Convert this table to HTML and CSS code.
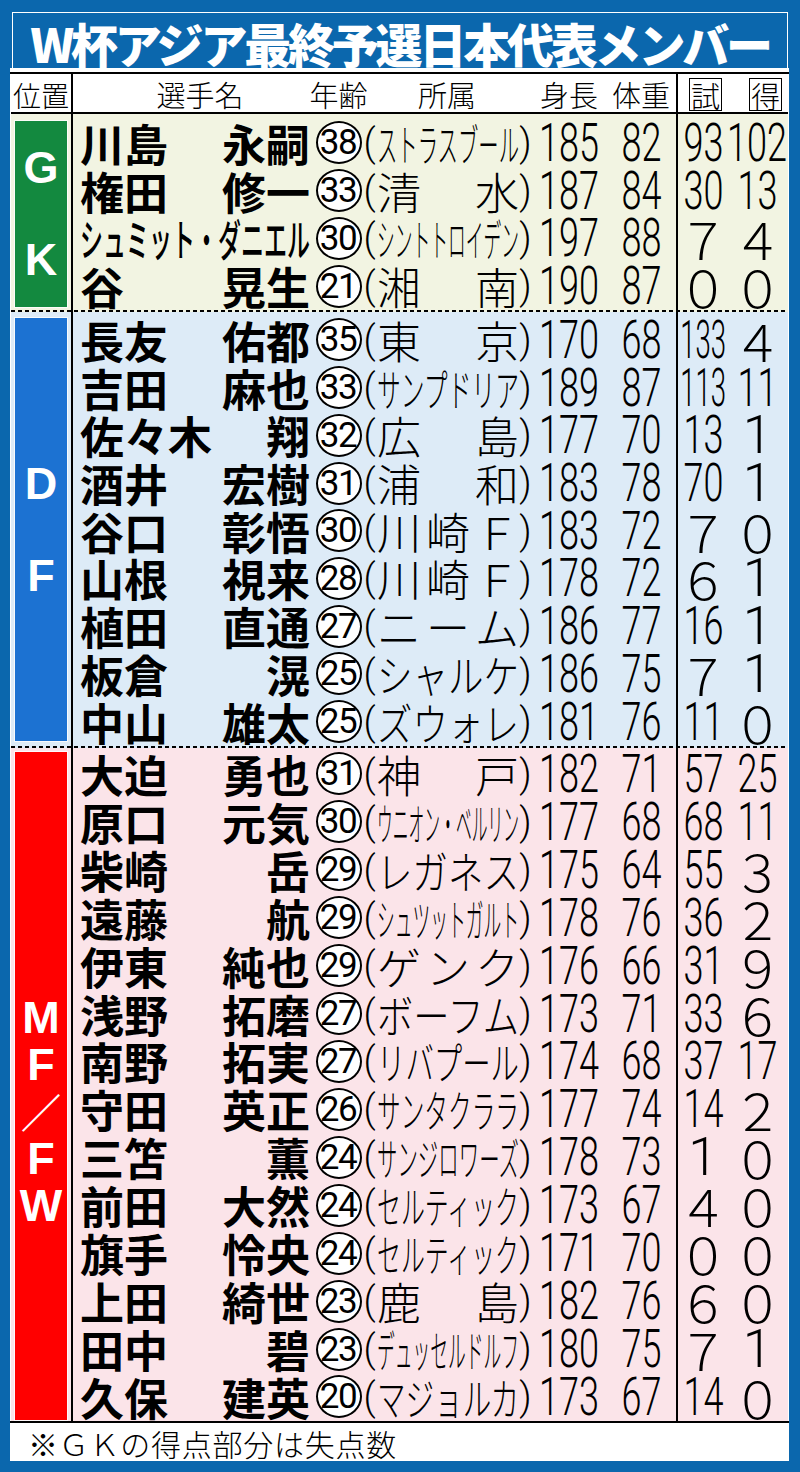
FILE: index.html
```html
<!DOCTYPE html>
<html lang="ja">
<head>
<meta charset="utf-8">
<title>W杯アジア最終予選日本代表メンバー</title>
<link rel="stylesheet" href="styles.css">
</head>
<body>
<div class="sheet">
  <header class="title"><div class="title-inner">W杯アジア最終予選日本代表メンバー</div></header>
  <div class="table">
    <div class="thead cols">
      <div class="h-pos">位置</div>
      <div class="h-name">選手名</div>
      <div class="h-age">年齢</div>
      <div class="h-club">所属</div>
      <div class="h-ht">身長</div>
      <div class="h-wt">体重</div>
      <div class="h-caps"><span class="boxed">試</span></div>
      <div class="h-goals"><span class="boxed">得</span></div>
    </div>

    <section class="group gk">
      <div class="label"><div class="label-box"><span>G</span><span>K</span></div></div>
      <div class="rows">
        <div class="row"><div class="c-name"><span>川島</span><span>永嗣</span></div><div class="c-age"><span class="circ">38</span></div><div class="c-club"><span class="par l">(</span><span class="club-in"><span class="ct">ストラスブール</span></span><span class="par r">)</span></div><div class="c-num"><span class="n">185</span></div><div class="c-num"><span class="n">82</span></div><div class="c-caps"><span class="n">93</span></div><div class="c-goals"><span class="n">102</span></div></div>
        <div class="row"><div class="c-name"><span>権田</span><span>修一</span></div><div class="c-age"><span class="circ">33</span></div><div class="c-club"><span class="par l">(</span><span class="club-in"><span class="ct">清水</span></span><span class="par r">)</span></div><div class="c-num"><span class="n">187</span></div><div class="c-num"><span class="n">84</span></div><div class="c-caps"><span class="n">30</span></div><div class="c-goals"><span class="n">13</span></div></div>
        <div class="row"><div class="c-name"><span class="kana">シュミット・ダニエル</span></div><div class="c-age"><span class="circ">30</span></div><div class="c-club"><span class="par l">(</span><span class="club-in"><span class="ct">シントトロイデン</span></span><span class="par r">)</span></div><div class="c-num"><span class="n">197</span></div><div class="c-num"><span class="n">88</span></div><div class="c-caps"><span class="fw">７</span></div><div class="c-goals"><span class="fw">４</span></div></div>
        <div class="row"><div class="c-name"><span>谷</span><span>晃生</span></div><div class="c-age"><span class="circ">21</span></div><div class="c-club"><span class="par l">(</span><span class="club-in"><span class="ct">湘南</span></span><span class="par r">)</span></div><div class="c-num"><span class="n">190</span></div><div class="c-num"><span class="n">87</span></div><div class="c-caps"><span class="fw">０</span></div><div class="c-goals"><span class="fw">０</span></div></div>
      </div>
    </section>

    <div class="dash dash-gk"></div>

    <section class="group df">
      <div class="label"><div class="label-box"><span>D</span><span>F</span></div></div>
      <div class="rows">
        <div class="row"><div class="c-name"><span>長友</span><span>佑都</span></div><div class="c-age"><span class="circ">35</span></div><div class="c-club"><span class="par l">(</span><span class="club-in"><span class="ct">東京</span></span><span class="par r">)</span></div><div class="c-num"><span class="n">170</span></div><div class="c-num"><span class="n">68</span></div><div class="c-caps"><span class="n n3">133</span></div><div class="c-goals"><span class="fw">４</span></div></div>
        <div class="row"><div class="c-name"><span>吉田</span><span>麻也</span></div><div class="c-age"><span class="circ">33</span></div><div class="c-club"><span class="par l">(</span><span class="club-in"><span class="ct">サンプドリア</span></span><span class="par r">)</span></div><div class="c-num"><span class="n">189</span></div><div class="c-num"><span class="n">87</span></div><div class="c-caps"><span class="n n3">113</span></div><div class="c-goals"><span class="n">11</span></div></div>
        <div class="row"><div class="c-name"><span>佐々木</span><span>翔</span></div><div class="c-age"><span class="circ">32</span></div><div class="c-club"><span class="par l">(</span><span class="club-in"><span class="ct">広島</span></span><span class="par r">)</span></div><div class="c-num"><span class="n">177</span></div><div class="c-num"><span class="n">70</span></div><div class="c-caps"><span class="n">13</span></div><div class="c-goals"><span class="one">1</span></div></div>
        <div class="row"><div class="c-name"><span>酒井</span><span>宏樹</span></div><div class="c-age"><span class="circ">31</span></div><div class="c-club"><span class="par l">(</span><span class="club-in"><span class="ct">浦和</span></span><span class="par r">)</span></div><div class="c-num"><span class="n">183</span></div><div class="c-num"><span class="n">78</span></div><div class="c-caps"><span class="n">70</span></div><div class="c-goals"><span class="one">1</span></div></div>
        <div class="row"><div class="c-name"><span>谷口</span><span>彰悟</span></div><div class="c-age"><span class="circ">30</span></div><div class="c-club"><span class="par l">(</span><span class="club-in"><span class="ct">川崎Ｆ</span></span><span class="par r">)</span></div><div class="c-num"><span class="n">183</span></div><div class="c-num"><span class="n">72</span></div><div class="c-caps"><span class="fw">７</span></div><div class="c-goals"><span class="fw">０</span></div></div>
        <div class="row"><div class="c-name"><span>山根</span><span>視来</span></div><div class="c-age"><span class="circ">28</span></div><div class="c-club"><span class="par l">(</span><span class="club-in"><span class="ct">川崎Ｆ</span></span><span class="par r">)</span></div><div class="c-num"><span class="n">178</span></div><div class="c-num"><span class="n">72</span></div><div class="c-caps"><span class="fw">６</span></div><div class="c-goals"><span class="one">1</span></div></div>
        <div class="row"><div class="c-name"><span>植田</span><span>直通</span></div><div class="c-age"><span class="circ">27</span></div><div class="c-club"><span class="par l">(</span><span class="club-in"><span class="ct">ニーム</span></span><span class="par r">)</span></div><div class="c-num"><span class="n">186</span></div><div class="c-num"><span class="n">77</span></div><div class="c-caps"><span class="n">16</span></div><div class="c-goals"><span class="one">1</span></div></div>
        <div class="row"><div class="c-name"><span>板倉</span><span>滉</span></div><div class="c-age"><span class="circ">25</span></div><div class="c-club"><span class="par l">(</span><span class="club-in"><span class="ct">シャルケ</span></span><span class="par r">)</span></div><div class="c-num"><span class="n">186</span></div><div class="c-num"><span class="n">75</span></div><div class="c-caps"><span class="fw">７</span></div><div class="c-goals"><span class="one">1</span></div></div>
        <div class="row"><div class="c-name"><span>中山</span><span>雄太</span></div><div class="c-age"><span class="circ">25</span></div><div class="c-club"><span class="par l">(</span><span class="club-in"><span class="ct">ズウォレ</span></span><span class="par r">)</span></div><div class="c-num"><span class="n">181</span></div><div class="c-num"><span class="n">76</span></div><div class="c-caps"><span class="n">11</span></div><div class="c-goals"><span class="fw">０</span></div></div>
      </div>
    </section>

    <div class="dash dash-df"></div>

    <section class="group mf">
      <div class="label"><div class="label-box"><span>M</span><span>F</span><span class="sl">／</span><span>F</span><span>W</span></div></div>
      <div class="rows">
        <div class="row"><div class="c-name"><span>大迫</span><span>勇也</span></div><div class="c-age"><span class="circ">31</span></div><div class="c-club"><span class="par l">(</span><span class="club-in"><span class="ct">神戸</span></span><span class="par r">)</span></div><div class="c-num"><span class="n">182</span></div><div class="c-num"><span class="n">71</span></div><div class="c-caps"><span class="n">57</span></div><div class="c-goals"><span class="n">25</span></div></div>
        <div class="row"><div class="c-name"><span>原口</span><span>元気</span></div><div class="c-age"><span class="circ">30</span></div><div class="c-club"><span class="par l">(</span><span class="club-in"><span class="ct">ウニオン・ベルリン</span></span><span class="par r">)</span></div><div class="c-num"><span class="n">177</span></div><div class="c-num"><span class="n">68</span></div><div class="c-caps"><span class="n">68</span></div><div class="c-goals"><span class="n">11</span></div></div>
        <div class="row"><div class="c-name"><span>柴崎</span><span>岳</span></div><div class="c-age"><span class="circ">29</span></div><div class="c-club"><span class="par l">(</span><span class="club-in"><span class="ct">レガネス</span></span><span class="par r">)</span></div><div class="c-num"><span class="n">175</span></div><div class="c-num"><span class="n">64</span></div><div class="c-caps"><span class="n">55</span></div><div class="c-goals"><span class="fw">３</span></div></div>
        <div class="row"><div class="c-name"><span>遠藤</span><span>航</span></div><div class="c-age"><span class="circ">29</span></div><div class="c-club"><span class="par l">(</span><span class="club-in"><span class="ct">シュツットガルト</span></span><span class="par r">)</span></div><div class="c-num"><span class="n">178</span></div><div class="c-num"><span class="n">76</span></div><div class="c-caps"><span class="n">36</span></div><div class="c-goals"><span class="fw">２</span></div></div>
        <div class="row"><div class="c-name"><span>伊東</span><span>純也</span></div><div class="c-age"><span class="circ">29</span></div><div class="c-club"><span class="par l">(</span><span class="club-in"><span class="ct">ゲンク</span></span><span class="par r">)</span></div><div class="c-num"><span class="n">176</span></div><div class="c-num"><span class="n">66</span></div><div class="c-caps"><span class="n">31</span></div><div class="c-goals"><span class="fw">９</span></div></div>
        <div class="row"><div class="c-name"><span>浅野</span><span>拓磨</span></div><div class="c-age"><span class="circ">27</span></div><div class="c-club"><span class="par l">(</span><span class="club-in"><span class="ct">ボーフム</span></span><span class="par r">)</span></div><div class="c-num"><span class="n">173</span></div><div class="c-num"><span class="n">71</span></div><div class="c-caps"><span class="n">33</span></div><div class="c-goals"><span class="fw">６</span></div></div>
        <div class="row"><div class="c-name"><span>南野</span><span>拓実</span></div><div class="c-age"><span class="circ">27</span></div><div class="c-club"><span class="par l">(</span><span class="club-in"><span class="ct">リバプール</span></span><span class="par r">)</span></div><div class="c-num"><span class="n">174</span></div><div class="c-num"><span class="n">68</span></div><div class="c-caps"><span class="n">37</span></div><div class="c-goals"><span class="n">17</span></div></div>
        <div class="row"><div class="c-name"><span>守田</span><span>英正</span></div><div class="c-age"><span class="circ">26</span></div><div class="c-club"><span class="par l">(</span><span class="club-in"><span class="ct">サンタクララ</span></span><span class="par r">)</span></div><div class="c-num"><span class="n">177</span></div><div class="c-num"><span class="n">74</span></div><div class="c-caps"><span class="n">14</span></div><div class="c-goals"><span class="fw">２</span></div></div>
        <div class="row"><div class="c-name"><span>三笘</span><span>薫</span></div><div class="c-age"><span class="circ">24</span></div><div class="c-club"><span class="par l">(</span><span class="club-in"><span class="ct">サンジロワーズ</span></span><span class="par r">)</span></div><div class="c-num"><span class="n">178</span></div><div class="c-num"><span class="n">73</span></div><div class="c-caps"><span class="one">1</span></div><div class="c-goals"><span class="fw">０</span></div></div>
        <div class="row"><div class="c-name"><span>前田</span><span>大然</span></div><div class="c-age"><span class="circ">24</span></div><div class="c-club"><span class="par l">(</span><span class="club-in"><span class="ct">セルティック</span></span><span class="par r">)</span></div><div class="c-num"><span class="n">173</span></div><div class="c-num"><span class="n">67</span></div><div class="c-caps"><span class="fw">４</span></div><div class="c-goals"><span class="fw">０</span></div></div>
        <div class="row"><div class="c-name"><span>旗手</span><span>怜央</span></div><div class="c-age"><span class="circ">24</span></div><div class="c-club"><span class="par l">(</span><span class="club-in"><span class="ct">セルティック</span></span><span class="par r">)</span></div><div class="c-num"><span class="n">171</span></div><div class="c-num"><span class="n">70</span></div><div class="c-caps"><span class="fw">０</span></div><div class="c-goals"><span class="fw">０</span></div></div>
        <div class="row"><div class="c-name"><span>上田</span><span>綺世</span></div><div class="c-age"><span class="circ">23</span></div><div class="c-club"><span class="par l">(</span><span class="club-in"><span class="ct">鹿島</span></span><span class="par r">)</span></div><div class="c-num"><span class="n">182</span></div><div class="c-num"><span class="n">76</span></div><div class="c-caps"><span class="fw">６</span></div><div class="c-goals"><span class="fw">０</span></div></div>
        <div class="row"><div class="c-name"><span>田中</span><span>碧</span></div><div class="c-age"><span class="circ">23</span></div><div class="c-club"><span class="par l">(</span><span class="club-in"><span class="ct">デュッセルドルフ</span></span><span class="par r">)</span></div><div class="c-num"><span class="n">180</span></div><div class="c-num"><span class="n">75</span></div><div class="c-caps"><span class="fw">７</span></div><div class="c-goals"><span class="one">1</span></div></div>
        <div class="row"><div class="c-name"><span>久保</span><span>建英</span></div><div class="c-age"><span class="circ">20</span></div><div class="c-club"><span class="par l">(</span><span class="club-in"><span class="ct">マジョルカ</span></span><span class="par r">)</span></div><div class="c-num"><span class="n">173</span></div><div class="c-num"><span class="n">67</span></div><div class="c-caps"><span class="n">14</span></div><div class="c-goals"><span class="fw">０</span></div></div>
      </div>
    </section>
  </div>
  <div class="note">※ＧＫの得点部分は失点数</div>
</div>
<script src="script.js"></script>
</body>
</html>
```

FILE: styles.css
```css
* { box-sizing: border-box; margin: 0; padding: 0; }

html { background: #0b67ad; }

body {
  width: 800px;
  height: 1472px;
  padding: 10px 11px 11px 10px;
  background: #0b67ad;
  font-family: "Noto Sans CJK JP", "Noto Sans", sans-serif;
  color: #000;
  overflow: hidden;
}

.sheet {
  width: 779px;
  height: 1451px;
  background: #fff;
  display: flex;
  flex-direction: column;
  overflow: hidden;
}

/* ---------- title ---------- */
.title {
  flex: none;
  height: 58px;
  padding: 2px 1px 0 2px;
  background: #0b67ad;
  margin-bottom: 4px;
}

.title-inner {
  height: 56px;
  border: 1.5px solid #fff;
  border-bottom: 0;
  display: flex;
  align-items: center;
  justify-content: center;
  padding-top: 4px;
  color: #fff;
  font-size: 47px;
  font-weight: 900;
  letter-spacing: -3.2px;
  line-height: 1.1;
  white-space: nowrap;
}

/* ---------- table ---------- */
.table {
  flex: none;
  padding: 0 1px;
  border-top: 2px solid #000;
  border-bottom: 2px solid #000;
}

.cols {
  display: grid;
  grid-template-columns: 62px 242px 47px 170px 74px 70px 57px 55px;
}

.thead {
  height: 40px;
  border-bottom: 2px solid #000;
  background: #fff;
  font-size: 29px;
  font-weight: 300;
  line-height: 1;
}

.thead > div {
  display: flex;
  align-items: center;
  justify-content: center;
  padding-top: 3px;
  white-space: nowrap;
}

.thead .h-pos { border-right: 2px solid #000; font-size: 28px; }
.thead .h-name { padding-left: 12px; }
.thead .h-caps { border-left: 2px solid #000; }
.thead .h-goals { padding-left: 10px; }

.boxed {
  display: inline-block;
  border: 1px solid #000;
  padding: 1px 1px 0;
  line-height: 30px;
}

/* ---------- groups ---------- */
.group {
  display: grid;
  grid-template-columns: 62px 715px;
  grid-template-rows: 100%;
}

.gk { height: 196px; background: #f2f4e2; }
.df { height: 434px; background: #ddebf7; }
.mf { height: 673px; background: #fbe4e9; }

.label {
  border-right: 2px solid #000;
  display: flex;
  padding: 7px 4px 3px 4px;
  min-height: 0;
}
.df .label { padding: 6px 4px 5px 4px; }
.mf .label { padding: 4px 4px 1px 4px; }

.label-box {
  flex: 1;
  display: flex;
  flex-direction: column;
  align-items: center;
  justify-content: center;
  color: #fff;
  font-family: "Liberation Sans", Arial, sans-serif;
  font-weight: 700;
  font-size: 45px;
  box-shadow: 0 0 0 1px rgba(255, 255, 255, 0.75);
}

.gk .label-box { background: #13893f; }
.df .label-box { background: #1c72d2; }
.mf .label-box { background: #ff0000; padding-top: 50px; }

.gk .label-box span,
.df .label-box span { line-height: 92px; }
.mf .label-box span { line-height: 47px; }
.mf .label-box .sl { font-family: "Noto Sans CJK JP", sans-serif; font-size: 40px; }

.rows {
  display: flex;
  flex-direction: column;
  min-height: 0;
  background: linear-gradient(#000, #000) 603px 0 / 2px 100% no-repeat;
}
.gk .rows { padding-top: 5px; }
.df .rows { padding: 4px 0 0.5px; }
.mf .rows { padding-top: 2px; }

.dash {
  flex: none;
  height: 2px;
  background:
    linear-gradient(#000, #000) 60px 0 / 2px 100% no-repeat,
    linear-gradient(#000, #000) 665px 0 / 2px 100% no-repeat,
    repeating-linear-gradient(90deg, #000 0 4px, transparent 4px 7px);
}
.dash-gk { background-color: #f2f4e2; }
.dash-df { background-color: #ddebf7; }

.row {
  flex: 1 1 0;
  min-height: 0;
  display: grid;
  grid-template-columns: 242px 47px 170px 74px 70px 57px 55px;
  grid-template-rows: 100%;
}

.row > div {
  display: flex;
  align-items: center;
  min-width: 0;
  min-height: 0;
}

/* name */
.c-name {
  justify-content: space-between;
  padding: 0 5px 0 7px;
  font-size: 44px;
  font-weight: 700;
  line-height: 44px;
  white-space: nowrap;
}

.kana {
  display: inline-block;
  font-weight: 500;
  transform-origin: left center;
}

/* age */
.c-age { justify-content: center; }

.circ {
  flex: none;
  width: 46px;
  height: 43px;
  border: 2px solid #000;
  border-radius: 50%;
  background: #fff;
  display: flex;
  align-items: center;
  justify-content: center;
  font-family: Roboto, sans-serif;
  font-size: 35px;
  letter-spacing: -1.5px;
  line-height: 1;
  padding-right: 1px;
}

/* club */
.c-club { padding: 0; }

.par {
  flex: none;
  font-family: Roboto, sans-serif;
  font-weight: 300;
  font-size: 38px;
  line-height: 40px;
  text-align: center;
}
.par.l { width: 15px; }
.par.r { width: 13px; }

.club-in {
  flex: 1;
  min-width: 0;
  display: flex;
  align-items: center;
  font-size: 44px;
  font-weight: 300;
  line-height: 44px;
}

.ct {
  display: inline-block;
  white-space: nowrap;
  transform-origin: left center;
}

.ct.spread {
  display: flex;
  width: 100%;
  justify-content: space-between;
}

/* numbers */
.c-num, .c-caps, .c-goals { justify-content: center; }
.c-caps { padding-right: 3px; }
.c-goals { padding-right: 6px; }

.n {
  display: inline-block;
  font-family: Roboto, sans-serif;
  font-weight: 300;
  font-size: 53px;
  line-height: 40px;
  transform: scaleX(0.68);
}
.n.n3 { transform: scaleX(0.52); }

.fw {
  font-size: 50px;
  font-weight: 300;
  line-height: 40px;
}

.one {
  font-family: Roboto, sans-serif;
  font-weight: 300;
  font-size: 53px;
  line-height: 40px;
}

/* ---------- footnote ---------- */
.note {
  flex: 1;
  display: flex;
  align-items: center;
  padding: 2px 0 0 18px;
  font-size: 30px;
  font-weight: 300;
  letter-spacing: 0.75px;
  line-height: 1.2;
  white-space: nowrap;
}
```

FILE: script.js
```js
(function () {
  function fit() {
    document.querySelectorAll('.ct').forEach(function (el) {
      if (el.dataset.done) return;
      el.dataset.done = '1';
      var avail = el.parentElement.clientWidth;
      var w = el.getBoundingClientRect().width;
      if (w <= avail) {
        var text = el.textContent;
        el.textContent = '';
        Array.from(text).forEach(function (ch) {
          var s = document.createElement('span');
          s.textContent = ch;
          el.appendChild(s);
        });
        el.classList.add('spread');
      } else {
        el.style.transform = 'scaleX(' + (avail / w) + ')';
      }
    });
    document.querySelectorAll('.kana').forEach(function (el) {
      var box = el.parentElement;
      var cs = getComputedStyle(box);
      var avail = box.clientWidth - parseFloat(cs.paddingLeft) - parseFloat(cs.paddingRight);
      el.style.transform = 'none';
      var w = el.getBoundingClientRect().width;
      el.style.transform = 'scaleX(' + Math.min(1, avail / w) + ')';
    });
  }
  fit();
})();
```
